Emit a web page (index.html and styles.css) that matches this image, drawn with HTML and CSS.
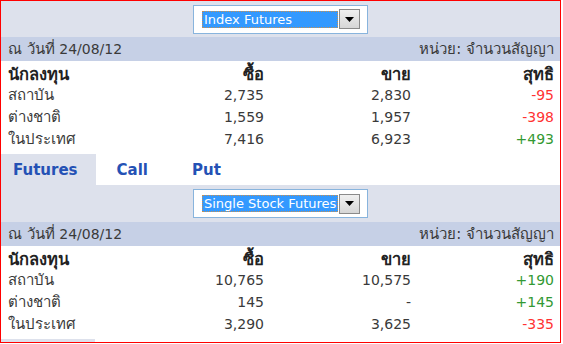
FILE: index.html
```html
<!DOCTYPE html>
<html lang="th">
<head>
<meta charset="utf-8">
<title>Futures</title>
<link rel="stylesheet" href="styles.css">
</head>
<body>
<div class="frame">
  <section class="panel">
    <div class="toolbar">
      <div class="select">
        <span class="sel-text">Index Futures</span>
        <span class="sel-btn"><svg width="9" height="5" viewBox="0 0 9 5"><path d="M0 0H9L4.5 5Z" fill="#000"/></svg></span>
      </div>
    </div>
    <div class="datebar"><span><span class="th">ณ วันที่</span> 24/08/12</span><span class="th">หน่วย: จำนวนสัญญา</span></div>
    <div class="grid">
      <div class="row head"><span class="th">นักลงทุน</span><span class="num th">ซื้อ</span><span class="num th">ขาย</span><span class="num th">สุทธิ</span></div>
      <div class="row"><span class="th">สถาบัน</span><span class="num">2,735</span><span class="num">2,830</span><span class="num neg">-95</span></div>
      <div class="row"><span class="th">ต่างชาติ</span><span class="num">1,559</span><span class="num">1,957</span><span class="num neg">-398</span></div>
      <div class="row"><span class="th">ในประเทศ</span><span class="num">7,416</span><span class="num">6,923</span><span class="num pos">+493</span></div>
    </div>
  </section>
  <nav class="tabs">
    <a class="tab active">Futures</a><a class="tab">Call</a><a class="tab">Put</a>
  </nav>
  <section class="panel">
    <div class="toolbar tall">
      <div class="select">
        <span class="sel-text">Single Stock Futures</span>
        <span class="sel-btn"><svg width="9" height="5" viewBox="0 0 9 5"><path d="M0 0H9L4.5 5Z" fill="#000"/></svg></span>
      </div>
    </div>
    <div class="datebar"><span><span class="th">ณ วันที่</span> 24/08/12</span><span class="th">หน่วย: จำนวนสัญญา</span></div>
    <div class="grid">
      <div class="row head"><span class="th">นักลงทุน</span><span class="num th">ซื้อ</span><span class="num th">ขาย</span><span class="num th">สุทธิ</span></div>
      <div class="row"><span class="th">สถาบัน</span><span class="num">10,765</span><span class="num">10,575</span><span class="num pos">+190</span></div>
      <div class="row"><span class="th">ต่างชาติ</span><span class="num">145</span><span class="num">-</span><span class="num pos">+145</span></div>
      <div class="row"><span class="th">ในประเทศ</span><span class="num">3,290</span><span class="num">3,625</span><span class="num neg">-335</span></div>
    </div>
  </section>
  <div class="tab-stub"></div>
</div>
</body>
</html>
```
FILE: styles.css
```css
html, body {
  margin: 0;
  padding: 0;
  background: #ffffff;
}
body {
  font-family: "DejaVu Sans", "Noto Sans", sans-serif;
  font-size: 13px;
  color: #3a3a3a;
}
.frame {
  width: 559px;
  height: 341px;
  border: 1px solid #ff0000;
  overflow: hidden;
  background: #ffffff;
}
.toolbar {
  height: 36px;
  background: #dde1ec;
  display: flex;
  justify-content: center;
  align-items: center;
}
.toolbar.tall {
  height: 37px;
}
.select {
  box-sizing: border-box;
  width: 175px;
  height: 29px;
  border: 1px solid #88b4dd;
  background: #ffffff;
  display: flex;
  align-items: center;
  padding-left: 8px;
  gap: 1px;
}
.sel-text {
  box-sizing: border-box;
  width: 136px;
  height: 17px;
  background: #3399ff;
  border: 1px dotted #c89050;
  color: #ffffff;
  font-size: 13px;
  line-height: 15px;
  padding-left: 1px;
  white-space: nowrap;
  overflow: hidden;
}
.sel-btn {
  box-sizing: border-box;
  width: 21px;
  height: 20px;
  border: 1px solid #8a8a8a;
  background: linear-gradient(#f0f0f0, #d6d6d6);
  display: flex;
  align-items: center;
  justify-content: center;
}
.datebar {
  height: 24px;
  background: #c6d0e6;
  display: flex;
  justify-content: space-between;
  align-items: center;
  padding: 0 6px 0 7px;
  font-size: 14px;
  color: #3a3a3a;
}
.th {
  font-size: 15px;
}
.grid {
  padding: 0 6px 5px 7px;
}
.row {
  display: grid;
  grid-template-columns: 143px 113px 147px 143px;
  height: 22px;
  align-items: center;
  font-size: 14px;
}
.row.head {
  font-weight: bold;
  color: #222222;
}
.row.head .th {
  font-size: 16.5px;
}
.num {
  text-align: right;
}
.neg { color: #ff3333; }
.pos { color: #339933; }
.tabs {
  height: 31px;
  display: flex;
  align-items: stretch;
}
.tab {
  display: flex;
  align-items: center;
  padding: 0 23px 0 21px;
  font-size: 15px;
  font-weight: bold;
  color: #2451b5;
}
.tab.active {
  background: #dde1ec;
  padding: 0 18px 0 12px;
}
.tab-stub {
  width: 94px;
  height: 31px;
  background: #dde1ec;
}
```
